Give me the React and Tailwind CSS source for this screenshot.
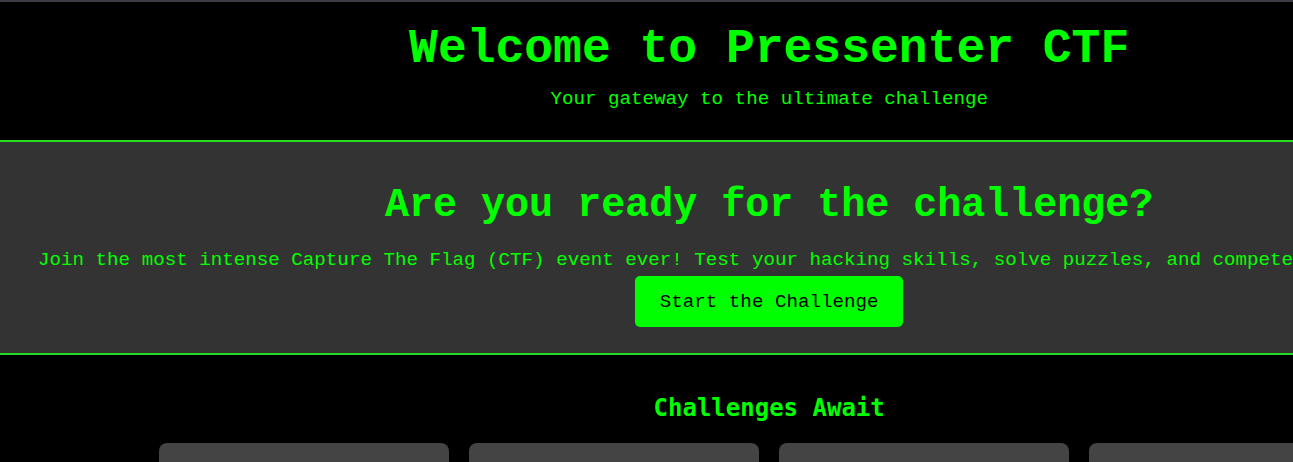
import React from "react";

const mono = "font-['Liberation_Mono','Courier_New',monospace]";

const App = () => {
  return (
    <div className={`w-max min-w-full min-h-screen bg-black ${mono}`}>
      {/* top strip */}
      <div className="h-[2px] bg-[#3c3c45]" />

      {/* Header */}
      <header className="bg-black pt-[20px] pb-[30px] text-center">
        <h1 className="text-[48px] leading-[54px] font-bold text-[#00ff00]">
          Welcome to Pressenter CTF
        </h1>
        <p className="mt-[12px] text-[19.2px] leading-[22px] text-[#00ff00]">
          Your gateway to the ultimate challenge
        </p>
      </header>

      {/* Hero */}
      <section className="bg-[#333333] border-y-2 border-[#22dd22] px-[38px] pt-[41px] pb-[26px] text-center">
        <h2 className="text-[40px] leading-[46px] font-bold text-[#00ff00]">
          Are you ready for the challenge?
        </h2>
        <p className="mt-[20px] whitespace-nowrap text-[19.2px] leading-[22px] text-[#00ff00]">
          Join the most intense Capture The Flag (CTF) event ever! Test your hacking skills, solve puzzles, and compete for the top spot!
        </p>
        <button className="mt-[5px] mx-auto flex h-[51px] w-[268px] items-center justify-center rounded-[5px] bg-[#00ff00] pt-[2px] text-[19.2px] text-black">
          Start the Challenge
        </button>
      </section>

      {/* Challenges */}
      <section className="pt-[39px] pb-10 text-center">
        <h2 className="font-['DejaVu_Sans_Mono',monospace] text-[24px] leading-[28px] font-bold text-[#00ff00]">
          Challenges Await
        </h2>
        <div className="mt-[21px] flex justify-center gap-[20px]">
          {[1, 2, 3, 4].map((i) => (
            <div key={i} className="h-[160px] w-[290px] rounded-[8px] bg-[#444444]" />
          ))}
        </div>
      </section>
    </div>
  );
};

export default App;
